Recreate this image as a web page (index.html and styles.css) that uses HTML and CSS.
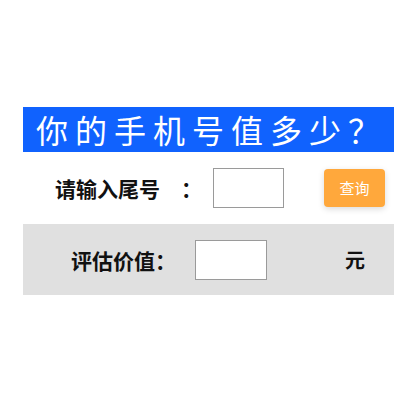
FILE: index.html
```html
<!DOCTYPE html>
<html lang="zh">
<head>
<meta charset="utf-8">
<link rel="stylesheet" href="styles.css">
</head>
<body>
<div class="box">
  <div class="title">你的手机号值多少？</div>
  <div class="row row-query">
    <span class="label label-query">请输入尾号　：</span>
    <input class="field" type="text">
    <button class="btn">查询</button>
  </div>
  <div class="row row-result">
    <span class="label label-result">评估价值：</span>
    <input class="field field-result" type="text">
    <span class="unit">元</span>
  </div>
</div>
</body>
</html>
```

FILE: styles.css
```css
html, body {
  margin: 0;
  padding: 0;
  background: #ffffff;
}
body {
  font-family: "Noto Sans CJK SC", "Noto Sans", sans-serif;
}
.box {
  margin: 107px 0 0 23px;
  width: 371px;
}
.title {
  height: 45px;
  background: #1062fe;
  color: #ffffff;
  font-size: 32px;
  line-height: 45px;
  letter-spacing: 7px;
  padding-left: 13px;
  white-space: nowrap;
  overflow: hidden;
}
.row {
  height: 71px;
  display: flex;
  align-items: center;
  box-sizing: border-box;
}
.row-query {
  background: #ffffff;
  padding-left: 32px;
  margin-bottom: 1px;
}
.row-result {
  background: #e0e0e0;
  padding-left: 48px;
}
.label {
  font-size: 21px;
  font-weight: bold;
  color: #111111;
  white-space: nowrap;
}
.label-query {
  width: 158px;
}
.label-result {
  width: 124px;
}
.field {
  width: 71px;
  height: 40px;
  box-sizing: border-box;
  border: 1px solid #9a9a9a;
  background: #ffffff;
  margin: 0;
  padding: 0;
}
.field-result {
  width: 72px;
}
.btn {
  margin-left: 40px;
  width: 61px;
  height: 38px;
  border: none;
  border-radius: 4px;
  background: #ffa83c;
  color: #ffffff;
  font-family: "Noto Sans CJK SC", sans-serif;
  font-size: 15px;
  box-shadow: 0 2px 6px rgba(0, 0, 0, 0.15);
  padding: 0;
}
.unit {
  margin-left: 78px;
  font-size: 20px;
  font-weight: bold;
  color: #111111;
}
```
